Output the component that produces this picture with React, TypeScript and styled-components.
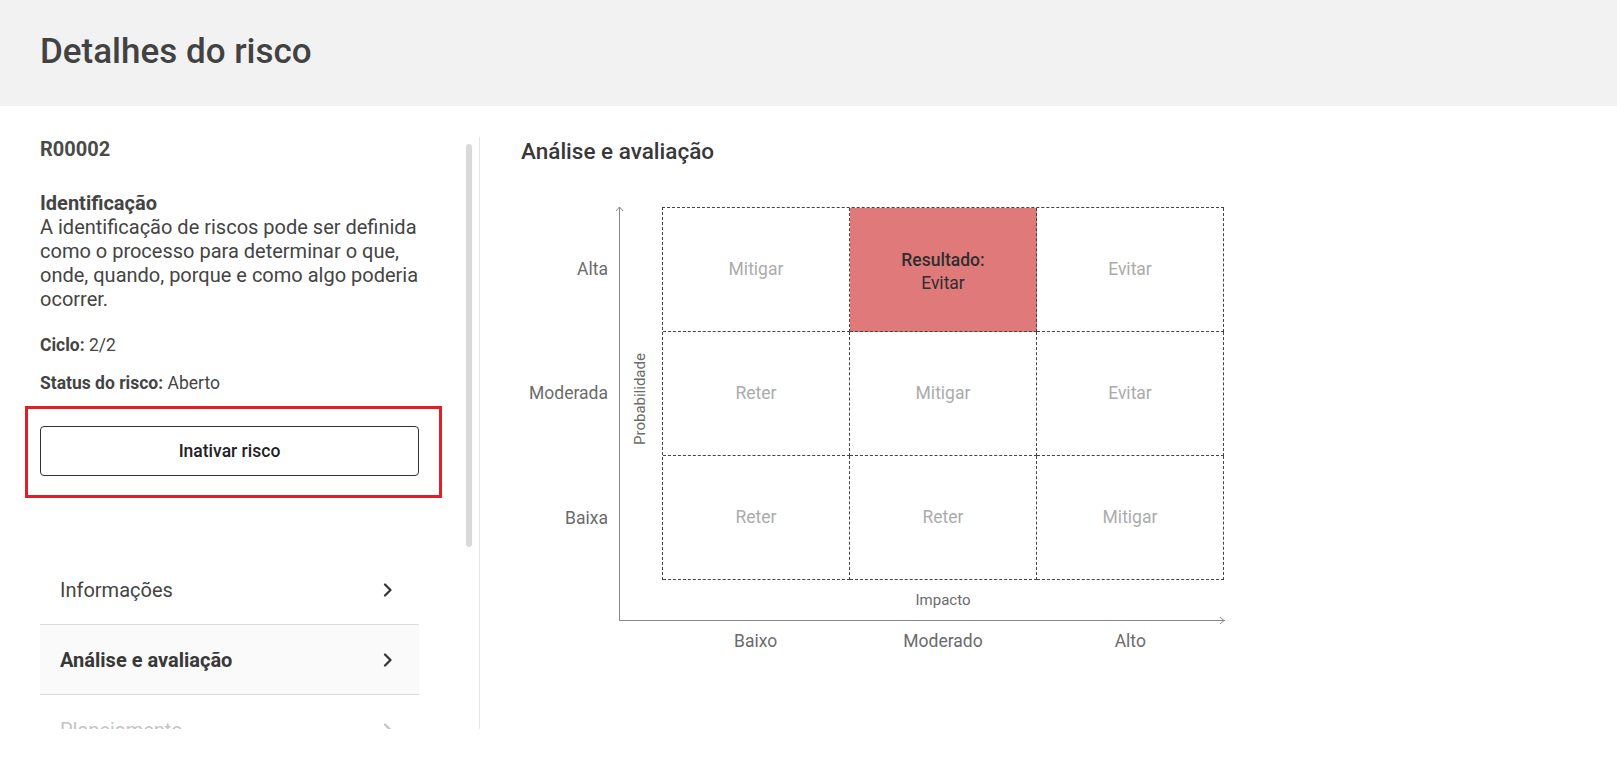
import React from 'react'
import styled, { createGlobalStyle } from 'styled-components'

const GlobalStyle = createGlobalStyle`
    * {
        box-sizing: border-box;
    }

    body {
        margin: 0;
        background: #ffffff;
        color: #444444;
        font-family: Roboto, 'Liberation Sans', sans-serif;
        overflow: hidden;
    }
`

interface IMatrixRow {
    label: string
    cells: string[]
}

const matrix: IMatrixRow[] = [
    { label: 'Alta', cells: ['Mitigar', 'Evitar', 'Evitar'] },
    { label: 'Moderada', cells: ['Reter', 'Mitigar', 'Evitar'] },
    { label: 'Baixa', cells: ['Reter', 'Reter', 'Mitigar'] },
]

const impactLabels = ['Baixo', 'Moderado', 'Alto']
const result = { row: 0, col: 1 }

const navItems = [
    { label: 'Informações', active: false, muted: false },
    { label: 'Análise e avaliação', active: true, muted: false },
    { label: 'Planejamento', active: false, muted: true },
]

function Chevron(props: { muted?: boolean }): JSX.Element {
    return (
        <svg width="10" height="14" viewBox="0 0 10 14" fill="none">
            <polyline points="2,1.5 7.5,7 2,12.5" stroke={props.muted ? '#c4c4c4' : '#333333'} strokeWidth="2.2" strokeLinecap="round" strokeLinejoin="round" />
        </svg>
    )
}

function App(): JSX.Element {
    return (
        <>
            <GlobalStyle />
            <HeaderSCP>
                <h1>Detalhes do risco</h1>
            </HeaderSCP>

            <MainSCP>
                <SidebarSCP>
                    <SidebarContentSCP>
                        <RiskCodeSCP>R00002</RiskCodeSCP>

                        <DescriptionSCP>
                            <strong>Identificação</strong>
                            A identificação de riscos pode ser definida como o processo para determinar o que, onde, quando, porque e como algo poderia ocorrer.
                        </DescriptionSCP>

                        <InfoLineSCP style={{ marginTop: 22 }}>
                            <strong>Ciclo:</strong> 2/2
                        </InfoLineSCP>
                        <InfoLineSCP style={{ marginTop: 14 }}>
                            <strong>Status do risco:</strong> Aberto
                        </InfoLineSCP>

                        <HighlightSCP>
                            <OutlineButtonSCP type="button">Inativar risco</OutlineButtonSCP>
                        </HighlightSCP>

                        <NavListSCP>
                            {navItems.map((item) => (
                                <NavItemSCP key={item.label} $active={item.active} $muted={item.muted}>
                                    <span>{item.label}</span>
                                    <Chevron muted={item.muted} />
                                </NavItemSCP>
                            ))}
                        </NavListSCP>
                    </SidebarContentSCP>

                    <ScrollThumbSCP />
                </SidebarSCP>

                <ContentSCP>
                    <SectionTitleSCP>Análise e avaliação</SectionTitleSCP>

                    <ChartSCP>
                        <RowLabelsSCP>
                            {matrix.map((row) => (
                                <span key={row.label}>{row.label}</span>
                            ))}
                        </RowLabelsSCP>

                        <PlotSCP>
                            <svg className="arrow-up" width="9" height="6" viewBox="0 0 9 6" fill="none">
                                <polyline points="1,5 4.5,1 8,5" stroke="#888888" strokeWidth="1" />
                            </svg>
                            <svg className="arrow-right" width="6" height="9" viewBox="0 0 6 9" fill="none">
                                <polyline points="1,1 5,4.5 1,8" stroke="#888888" strokeWidth="1" />
                            </svg>

                            <AxisTitleSCP $vertical>Probabilidade</AxisTitleSCP>

                            <div>
                                <MatrixGridSCP>
                                    {matrix.map((row, r) =>
                                        row.cells.map((cell, c) => {
                                            const isResult = r === result.row && c === result.col
                                            return (
                                                <MatrixCellSCP key={`${r}-${c}`} $highlight={isResult}>
                                                    {isResult ? (
                                                        <>
                                                            <strong>Resultado:</strong>
                                                            <span>{cell}</span>
                                                        </>
                                                    ) : (
                                                        cell
                                                    )}
                                                </MatrixCellSCP>
                                            )
                                        })
                                    )}
                                </MatrixGridSCP>
                                <AxisTitleSCP>Impacto</AxisTitleSCP>
                            </div>
                        </PlotSCP>

                        <ColLabelsSCP>
                            {impactLabels.map((label) => (
                                <span key={label}>{label}</span>
                            ))}
                        </ColLabelsSCP>
                    </ChartSCP>
                </ContentSCP>
            </MainSCP>
        </>
    )
}

export default App

const HeaderSCP = styled.header`
    height: 106px;
    background: #f2f2f2;
    display: flex;
    align-items: center;
    padding: 0 40px;

    h1 {
        margin: 0 0 3px;
        font-size: 35px;
        font-weight: 500;
        color: #424242;
    }
`

const MainSCP = styled.main`
    display: flex;
    padding-top: 31px;
`

const SidebarSCP = styled.aside`
    position: relative;
    width: 480px;
    height: 592px;
    padding-left: 40px;
    overflow: hidden;
    border-right: 1px solid #e6e6e6;
    flex-shrink: 0;
`

const SidebarContentSCP = styled.div`
    width: 379px;
`

const ScrollThumbSCP = styled.div`
    position: absolute;
    top: 7px;
    left: 466px;
    width: 6px;
    height: 403px;
    border-radius: 3px;
    background: #d9d9d9;
`

const RiskCodeSCP = styled.div`
    font-size: 20px;
    line-height: 24px;
    font-weight: 700;
    color: #4a4a4a;
`

const DescriptionSCP = styled.p`
    margin: 30px 0 0;
    font-size: 20px;
    line-height: 24px;
    color: #444444;

    strong {
        display: block;
        font-weight: 700;
    }
`

const InfoLineSCP = styled.div`
    font-size: 17.5px;
    line-height: 24px;
    color: #444444;

    strong {
        font-weight: 700;
    }
`

const HighlightSCP = styled.div`
    position: relative;
    margin-top: 31px;

    &::after {
        content: '';
        position: absolute;
        top: -20px;
        left: -15px;
        right: -23px;
        bottom: -22px;
        border: 3px solid #e31e24;
        pointer-events: none;
    }
`

const OutlineButtonSCP = styled.button`
    width: 100%;
    height: 50px;
    background: #ffffff;
    border: 1px solid #333333;
    border-radius: 4px;
    font-family: inherit;
    font-size: 17.5px;
    font-weight: 500;
    color: #222222;
    cursor: pointer;
`

const NavListSCP = styled.nav`
    margin-top: 79px;
`

const NavItemSCP = styled.div<{ $active?: boolean; $muted?: boolean }>`
    display: flex;
    align-items: center;
    justify-content: space-between;
    height: 70px;
    padding: 0 26px 0 20px;
    border-bottom: 1px solid #dddddd;
    background: ${(p) => (p.$active ? '#fafafa' : '#ffffff')};
    font-size: 20px;
    font-weight: ${(p) => (p.$active ? 700 : 400)};
    color: ${(p) => (p.$muted ? '#c4c4c4' : p.$active ? '#383838' : '#444444')};
`

const ContentSCP = styled.section`
    padding-left: 41px;
`

const SectionTitleSCP = styled.h2`
    margin: 0 0 42px;
    font-size: 22.5px;
    line-height: 28px;
    font-weight: 500;
    color: #383838;
`

const ChartSCP = styled.div`
    display: grid;
    grid-template-columns: 87px 606px;
    column-gap: 11px;
`

const RowLabelsSCP = styled.div`
    height: 373px;
    display: grid;
    grid-template-rows: repeat(3, 1fr);
    font-size: 17.5px;
    color: #6b6b6b;

    span {
        display: flex;
        align-items: center;
        justify-content: flex-end;
    }
`

const PlotSCP = styled.div`
    position: relative;
    display: flex;
    border-left: 1px solid #888888;
    border-bottom: 1px solid #888888;

    .arrow-up {
        position: absolute;
        top: -1px;
        left: -5px;
    }

    .arrow-right {
        position: absolute;
        right: 0;
        bottom: -5px;
    }
`

const AxisTitleSCP = styled.div<{ $vertical?: boolean }>`
    display: flex;
    align-items: center;
    justify-content: center;
    font-size: 15px;
    color: #6b6b6b;
    width: ${(p) => (p.$vertical ? '42px' : '562px')};
    height: ${(p) => (p.$vertical ? '373px' : '40px')};
    ${(p) => p.$vertical && `
        writing-mode: vertical-rl;
        transform: rotate(180deg);
        padding-left: 2px;
        padding-bottom: 12px;
    `}
`

const MatrixGridSCP = styled.div`
    display: grid;
    grid-template-columns: repeat(3, 1fr);
    grid-template-rows: repeat(3, 1fr);
    width: 562px;
    height: 373px;
    border-top: 1px dashed #444444;
    border-left: 1px dashed #444444;
`

const MatrixCellSCP = styled.div<{ $highlight?: boolean }>`
    display: flex;
    flex-direction: column;
    align-items: center;
    justify-content: center;
    padding-top: ${(p) => (p.$highlight ? '5px' : '0')};
    border-right: 1px dashed #444444;
    border-bottom: 1px dashed #444444;
    background: ${(p) => (p.$highlight ? '#e07a7a' : 'transparent')};
    font-size: 17.5px;
    line-height: 23px;
    color: ${(p) => (p.$highlight ? '#2e2e2e' : '#ababab')};

    strong {
        font-weight: 500;
    }
`

const ColLabelsSCP = styled.div`
    grid-column: 2;
    margin-left: 43px;
    width: 562px;
    height: 40px;
    display: grid;
    grid-template-columns: repeat(3, 1fr);
    font-size: 17.5px;
    color: #6b6b6b;

    span {
        display: flex;
        align-items: center;
        justify-content: center;
    }
`
